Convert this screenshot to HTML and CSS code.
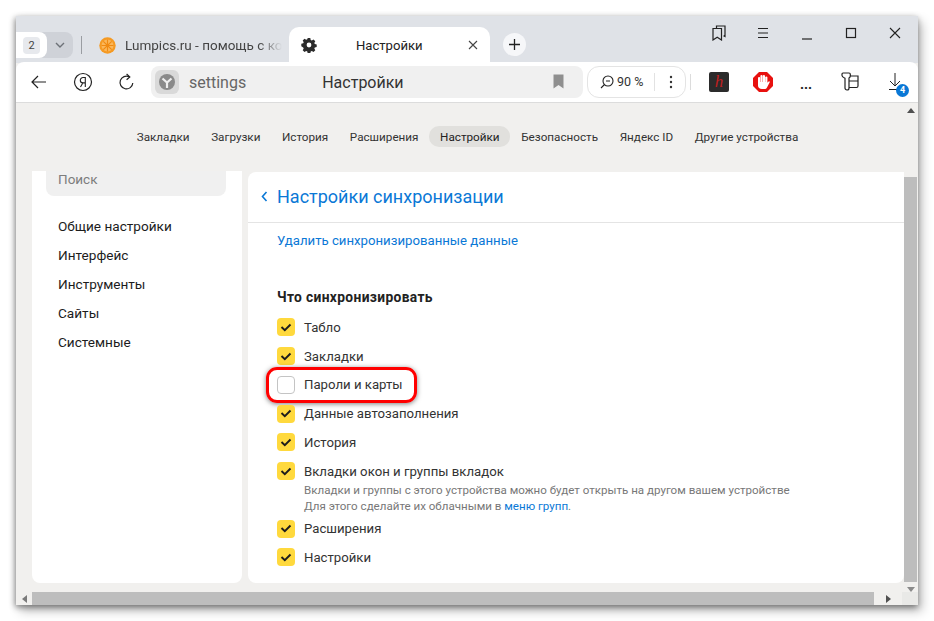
FILE: index.html
```html
<!DOCTYPE html>
<html lang="ru">
<head>
<meta charset="utf-8">
<title>Настройки</title>
<link rel="stylesheet" href="styles.css">
</head>
<body>
<div class="window">
  <div class="tabbar">
    <div class="group-switch">
      <div class="group-count"><span class="group-num">2</span></div>
      <div class="group-arrow"><svg width="12" height="8" viewBox="0 0 12 8"><path d="M2 2l4 4 4-4" fill="none" stroke="#6d7177" stroke-width="1.4"/></svg></div>
    </div>
    <div class="tab-sep"></div>
    <div class="tab-inactive">
      <svg class="favicon" width="17" height="17" viewBox="0 0 17 17"><circle cx="8.5" cy="8.5" r="8.2" fill="#f59a23"/><circle cx="8.5" cy="8.5" r="6" fill="#fbb75a"/><path d="M8.5 2.5v12M2.5 8.5h12M4.3 4.3l8.4 8.4M12.7 4.3l-8.4 8.4" stroke="#f08a12" stroke-width="1.2"/></svg>
      <span class="tab-title">Lumpics.ru - помощь с компьютером</span>
    </div>
    <div class="tab-active">
      <svg width="16" height="16" viewBox="0 0 16 16"><path fill="#2b2b2b" fill-rule="evenodd" d="M6.7 1h2.6l.4 1.9 1.1.5 1.7-1 1.8 1.8-1 1.7.5 1.1 1.9.4v2.6l-1.9.4-.5 1.1 1 1.7-1.8 1.8-1.7-1-1.1.5-.4 1.9H6.7l-.4-1.9-1.1-.5-1.7 1-1.8-1.8 1-1.7-.5-1.1L.3 9.3V6.7l1.9-.4.5-1.1-1-1.7 1.8-1.8 1.7 1 1.1-.5zM8 5.6a2.4 2.4 0 1 0 0 4.800a2.400 2.400 0 0 0 0-4.800z"/></svg>
      <span class="tab-active-title">Настройки</span>
      <svg class="tab-close" width="10" height="10" viewBox="0 0 10 10"><path d="M1 1l8 8M9 1l-8 8" stroke="#444" stroke-width="1.100"/></svg>
    </div>
    <div class="new-tab"><svg width="13" height="13" viewBox="0 0 13 13"><path d="M6.500 1v11M1 6.500h11" stroke="#222" stroke-width="1.300"/></svg></div>
    <div class="win-controls">
      <svg width="14" height="16" viewBox="0 0 14 16"><path d="M4.500 3V1h8.500v10.500l-1.500-.8M1 3.500h8.500V15L5.200 12.300 1 15z" fill="none" stroke="#222" stroke-width="1.200"/></svg>
      <svg width="14" height="12" viewBox="0 0 14 12"><path d="M2 1.500h10M2 6h10M2 10.500h10" stroke="#222" stroke-width="1.200"/></svg>
      <svg width="14" height="14" viewBox="0 0 14 14"><path d="M2 13h10" stroke="#222" stroke-width="1.200"/></svg>
      <svg width="14" height="14" viewBox="0 0 14 14"><rect x="2.500" y="2.500" width="9" height="9" fill="none" stroke="#222" stroke-width="1.200"/></svg>
      <svg width="14" height="14" viewBox="0 0 14 14"><path d="M2 2l10 10M12 2L2 12" stroke="#222" stroke-width="1.100"/></svg>
    </div>
  </div>

  <div class="toolbar">
    <div class="nav-btn"><svg width="18" height="16" viewBox="0 0 18 16"><path d="M16 8H2M8 2L2 8l6 6" fill="none" stroke="#222" stroke-width="1.200"/></svg></div>
    <div class="nav-btn"><svg width="20" height="20" viewBox="0 0 20 20"><circle cx="10" cy="10" r="8.500" fill="none" stroke="#222" stroke-width="1.200"/><path d="M12.300 15V5.500h-2.300a2.700 2.700 0 0 0 0 5.400h2.300M9.800 10.900L7.500 15" fill="none" stroke="#222" stroke-width="1.100"/></svg></div>
    <div class="nav-btn"><svg width="18" height="18" viewBox="0 0 18 18"><path d="M14.800 10a6.400 6.400 0 1 1-3.500-6.200" fill="none" stroke="#222" stroke-width="1.200"/><path d="M8.600 1l3.200 2.900-3.200 2.900" fill="none" stroke="#222" stroke-width="1.200"/></svg></div>
    <div class="address">
      <div class="addr-icon"><svg width="16" height="16" viewBox="0 0 16 16"><circle cx="8" cy="8" r="8" fill="#8a8a8a"/><path d="M3.500 4.500L8 8.500l4.500-4M8 8.500V14" fill="none" stroke="#eee" stroke-width="2.200"/></svg></div>
      <span class="addr-url">settings</span>
      <span class="addr-title">Настройки</span>
      <svg class="addr-mark" width="11" height="15" viewBox="0 0 11 15"><path d="M0.500 0.500h10v14l-5-3.500-5 3.500z" fill="#8f8f8f"/></svg>
    </div>
    <div class="zoom">
      <svg width="14" height="14" viewBox="0 0 14 14"><circle cx="8" cy="6" r="5" fill="none" stroke="#222" stroke-width="1.100"/><path d="M6 6h4M4.500 9.500L1 13" fill="none" stroke="#222" stroke-width="1.100"/></svg>
      <span class="zoom-val">90 %</span>
      <span class="zoom-sep"></span>
      <svg width="4" height="14" viewBox="0 0 4 14"><circle cx="2" cy="2" r="1.200" fill="#333"/><circle cx="2" cy="7" r="1.200" fill="#333"/><circle cx="2" cy="12" r="1.200" fill="#333"/></svg>
    </div>
    <div class="tool-sep"></div>
    <div class="ext ext-h"><span class="ext-h-letter">h</span></div>
    <div class="ext ext-stop"><svg width="20" height="20" viewBox="0 0 20 20"><path d="M6 0h8l6 6v8l-6 6H6l-6-6V6z" fill="#e8110f"/><g fill="#fff"><rect x="5" y="5" width="2.200" height="8" rx="1.100"/><rect x="7.400" y="3" width="2.200" height="9" rx="1.100"/><rect x="9.800" y="3" width="2.200" height="9" rx="1.100"/><rect x="12.200" y="4.500" width="2.200" height="8" rx="1.100"/><path d="M5 10h9.400v1l1.200-1.500c.7-.6 1.500 0 1.100.8L14 15.500c-.6 1-1.400 1.500-2.500 1.500H9c-2.500 0-4-1.500-4-3.500z"/></g></svg></div>
    <div class="ext ext-dots">...</div>
    <div class="ext"><svg width="20" height="20" viewBox="0 0 20 20"><path d="M3 1h6c.8 0 1.300.5 1.300 1.300V4c0 1-.500 1.500-1.300 2v10c0 1.200-.7 2-1.800 2H7c-1.200 0-2-.8-2-2V6.200C3.500 5.500 2 5 2 3.500V2C2 1.400 2.400 1 3 1zM10.500 4H18v10c0 1-.5 1.500-1.500 1.500H9M9.500 9h8.500" fill="none" stroke="#222" stroke-width="1.200"/></svg></div>
    <div class="ext ext-dl"><svg width="16" height="18" viewBox="0 0 16 18"><path d="M7 0v12M2 8l5 5 5-5M1 16.500h10" fill="none" stroke="#222" stroke-width="1"/></svg><span class="dl-badge">4</span></div>
  </div>

  <div class="page">
    <div class="page-row">
      <div class="main">
        <nav class="topnav">
          <a class="nav-item">Закладки</a>
          <a class="nav-item">Загрузки</a>
          <a class="nav-item">История</a>
          <a class="nav-item">Расширения</a>
          <a class="nav-item nav-current">Настройки</a>
          <a class="nav-item">Безопасность</a>
          <a class="nav-item">Яндекс ID</a>
          <a class="nav-item">Другие устройства</a>
        </nav>
        <div class="columns">
          <aside class="sidebar">
            <div class="search">Поиск</div>
            <ul class="side-list">
              <li>Общие настройки</li>
              <li>Интерфейс</li>
              <li>Инструменты</li>
              <li>Сайты</li>
              <li>Системные</li>
            </ul>
          </aside>
          <section class="panel">
            <header class="panel-head">
              <svg width="7" height="11" viewBox="0 0 7 11"><path d="M5.500 1L1.500 5.500l4 4.500" fill="none" stroke="#0a78d6" stroke-width="1.600"/></svg>
              <h1 class="panel-title">Настройки синхронизации</h1>
            </header>
            <div class="panel-body">
              <a class="del-link">Удалить синхронизированные данные</a>
              <h2 class="sync-title">Что синхронизировать</h2>
              <div class="check-row"><span class="box on"><svg width="12" height="9" viewBox="0 0 12 9"><path d="M1.500 4l3.300 3.200L10.500 1.500" fill="none" stroke="#1c1c1c" stroke-width="1.900"/></svg></span><span>Табло</span></div>
              <div class="check-row"><span class="box on"><svg width="12" height="9" viewBox="0 0 12 9"><path d="M1.500 4l3.300 3.200L10.500 1.500" fill="none" stroke="#1c1c1c" stroke-width="1.900"/></svg></span><span>Закладки</span></div>
              <div class="check-row"><span class="box"></span><span>Пароли и карты</span><span class="highlight"></span></div>
              <div class="check-row"><span class="box on"><svg width="12" height="9" viewBox="0 0 12 9"><path d="M1.500 4l3.300 3.200L10.500 1.500" fill="none" stroke="#1c1c1c" stroke-width="1.900"/></svg></span><span>Данные автозаполнения</span></div>
              <div class="check-row"><span class="box on"><svg width="12" height="9" viewBox="0 0 12 9"><path d="M1.500 4l3.300 3.200L10.500 1.500" fill="none" stroke="#1c1c1c" stroke-width="1.900"/></svg></span><span>История</span></div>
              <div class="check-row"><span class="box on"><svg width="12" height="9" viewBox="0 0 12 9"><path d="M1.500 4l3.300 3.200L10.500 1.500" fill="none" stroke="#1c1c1c" stroke-width="1.900"/></svg></span><span>Вкладки окон и группы вкладок</span></div>
              <p class="check-note">Вкладки и группы с этого устройства можно будет открыть на другом вашем устройстве<br>Для этого сделайте их облачными в <a class="note-link">меню групп</a>.</p>
              <div class="check-row"><span class="box on"><svg width="12" height="9" viewBox="0 0 12 9"><path d="M1.500 4l3.300 3.200L10.500 1.500" fill="none" stroke="#1c1c1c" stroke-width="1.900"/></svg></span><span>Расширения</span></div>
              <div class="check-row"><span class="box on"><svg width="12" height="9" viewBox="0 0 12 9"><path d="M1.500 4l3.300 3.200L10.500 1.500" fill="none" stroke="#1c1c1c" stroke-width="1.900"/></svg></span><span>Настройки</span></div>
            </div>
          </section>
        </div>
      </div>
      <div class="vscroll">
        <svg width="8" height="5" viewBox="0 0 8 5"><path d="M4 0l4 5H0z" fill="#505050"/></svg>
        <div class="vthumb"></div>
        <svg width="8" height="5" viewBox="0 0 8 5"><path d="M4 5l4-5H0z" fill="#8a8a8a"/></svg>
      </div>
    </div>
    <div class="hscroll">
      <div class="harrow"><svg width="5" height="8" viewBox="0 0 5 8"><path d="M0 4l5-4v8z" fill="#7a7a7a"/></svg></div>
      <div class="hthumb"></div>
      <div class="harrow harrow-right"><svg width="5" height="8" viewBox="0 0 5 8"><path d="M5 4L0 0v8z" fill="#505050"/></svg></div>
      <div class="corner"></div>
    </div>
  </div>
</div>
</body>
</html>
```
FILE: styles.css
```css
* { box-sizing: border-box; }
html, body { margin: 0; height: 100%; background: #fff; overflow: hidden; }
body { padding: 16px; font-family: Roboto, "Noto Sans", sans-serif; color: #222; }
.window { width: 902px; height: 589px; display: flex; flex-direction: column; background: #f1f0ee; box-shadow: -1px 2px 6px rgba(0,0,0,.45), 4px 6px 10px rgba(0,0,0,.25); }

.tabbar { height: 47px; background: #dfe2e7; display: flex; align-items: flex-start; padding-top: 11px; position: relative; flex: none; }
.group-switch { width: 57px; height: 26px; margin-top: 5px; display: flex; background: #cfd2d8; border-radius: 0 8px 8px 0; }
.group-count { width: 31px; height: 26px; background: #fff; border-radius: 0 8px 8px 0; display: flex; align-items: center; justify-content: center; }
.group-num { width: 17px; height: 17px; background: #e7e9ed; border-radius: 4px; font-size: 11px; line-height: 17px; text-align: center; color: #444; }
.group-arrow { flex: 1; display: flex; align-items: center; justify-content: center; }
.tab-sep { width: 1px; height: 18px; background: #9a9da2; margin: 9px 0 0 8px; }
.tab-inactive { width: 207px; display: flex; align-items: center; height: 26px; margin-top: 5px; padding-left: 17px; gap: 9px; overflow: hidden; white-space: nowrap; }
.tab-title { font-size: 13.500px; color: #444; width: 157px; overflow: hidden; -webkit-mask-image: linear-gradient(90deg, #000 85%, transparent); mask-image: linear-gradient(90deg, #000 85%, transparent); }
.tab-active { width: 201px; height: 36px; background: #fff; border-radius: 10px 10px 0 0; display: flex; align-items: center; padding: 0 0 0 12px; flex: none; position: relative; }
.tab-active-title { font-size: 13.100px; color: #222; margin-left: 39px; }
.tab-close { margin-left: auto; margin-right: 12px; }
.new-tab { width: 23px; height: 23px; background: #f6f7f9; border-radius: 50%; margin: 6px 0 0 13px; display: flex; align-items: center; justify-content: center; }
.win-controls { position: absolute; right: 16px; top: 10px; display: flex; gap: 30px; align-items: center; height: 14px; }

.toolbar { height: 41px; background: #fff; display: flex; align-items: center; padding: 0 0 1px 1px; flex: none; border-bottom: 1px solid #dcdcdc; border-radius: 8px 8px 0 0; margin-top: -1px; position: relative; }
.nav-btn { width: 44px; display: flex; justify-content: center; }
.address { width: 432px; height: 32px; background: #f0f0f0; border-radius: 8px; margin-left: 2px; display: flex; align-items: center; padding-left: 4px; position: relative; }
.addr-icon { width: 24px; height: 24px; background: #d9d9d9; border-radius: 6px; display: flex; align-items: center; justify-content: center; }
.addr-url { font-size: 16px; color: #666; margin: 2px 0 0 10px; }
.addr-title { font-size: 16px; color: #333; margin: 2px 0 0 76px; }
.addr-mark { margin-left: auto; margin-right: 19px; }
.zoom { width: 99px; height: 32px; border: 1px solid #e4e4e4; border-radius: 12px; margin-left: 4px; display: flex; align-items: center; padding-left: 12px; }
.zoom-val { font-size: 12.500px; color: #333; margin-left: 3px; }
.zoom-sep { width: 1px; height: 18px; background: #e2e2e2; margin: 0 14px 0 11px; }
.tool-sep { width: 1px; height: 16px; background: #dcdcdc; margin: 0 0 0 4px; }
.ext { width: 20px; height: 20px; display: flex; align-items: center; justify-content: center; margin-left: 24px; flex: none; position: relative; }
.ext-h { margin-left: 18px; background: #2b2b2b; border-radius: 2px; }
.ext-h-letter { font: italic 400 17px "Liberation Serif", serif; color: #c01f1f; }
.ext-dots { font-size: 14px; font-weight: 700; color: #222; margin-top: 4px; margin-left: 23px; }
.ext-dl { margin-left: 26px; }
.dl-badge { position: absolute; right: -3px; bottom: -5px; width: 13px; height: 13px; border-radius: 50%; background: #0a78d6; color: #fff; font-size: 9px; font-weight: 700; line-height: 13px; text-align: center; }

.page { flex: 1; display: flex; flex-direction: column; min-height: 0; }
.page-row { flex: 1; display: flex; min-height: 0; }
.main { flex: 1; min-width: 0; display: flex; flex-direction: column; }
.topnav { height: 68px; display: flex; justify-content: center; align-items: flex-start; padding: 23px 0 0 15px; flex: none; }
.nav-item { font-size: 11.700px; line-height: 20px; padding: 1px 10.800px 0; color: #333; border-radius: 10px; white-space: nowrap; }
.nav-current { background: #e1e0dd; color: #222; }
.columns { flex: 1; min-height: 0; display: flex; gap: 6px; padding: 0 0 9px 16px; }
.sidebar { width: 210px; background: #fff; border-radius: 0 0 8px 8px; padding: 0 16px 0 14px; }
.search { height: 25px; background: #f0f0f0; border-radius: 0 0 8px 8px; font-size: 13.500px; line-height: 17px; color: #7d7d7d; padding: 0 0 0 12px; }
.side-list { list-style: none; margin: 16px 0 0; padding: 0 0 0 12px; }
.side-list li { font-size: 13.600px; line-height: 29px; color: #1c1c1c; }
.panel { flex: 1; background: #fff; border-radius: 8px 0 8px 8px; margin-top: 1px; }
.panel-head { height: 51px; padding: 0 0 1px 13px; border-bottom: 1px solid #e4e4e4; display: flex; align-items: center; gap: 9px; }
.panel-title { font-size: 18px; font-weight: 400; color: #0a78d6; margin: 0; }
.panel-body { padding: 9px 0 0 29px; }
.del-link { display: block; font-size: 13.200px; line-height: 18px; color: #0a78d6; }
.sync-title { font-size: 13.800px; letter-spacing: .35px; line-height: 18px; font-weight: 700; color: #222; margin: 38px 0 7px; }
.check-row { display: flex; align-items: center; height: 28.750px; font-size: 13.200px; gap: 9px; color: #333; position: relative; }
.box { width: 18px; height: 18px; border-radius: 4px; border: 1px solid #c4c4c4; display: flex; align-items: center; justify-content: center; flex: none; }
.box.on { background: #ffd93d; border: none; }
.check-note { font-size: 11.570px; line-height: 16px; color: #777; margin: -4px 0 .800px 27px; }
.note-link { color: #0a78d6; }
.highlight { position: absolute; left: -11px; top: -4px; width: 151px; height: 36px; border: 3.500px solid #f00; border-radius: 11px; box-shadow: 0 1px 5px rgba(0,0,0,.5); pointer-events: none; }
.vscroll { width: 13px; margin-right: 1px; display: flex; flex-direction: column; align-items: center; padding-top: 5px; }
.vthumb { width: 13px; flex: 1; background: #bdbdbd; margin: 64px 0 5px; }
.hscroll { height: 13px; display: flex; flex: none; }
.harrow { width: 16px; display: flex; align-items: center; justify-content: center; }
.harrow-right { width: 28px; }
.hthumb { flex: 1; background: #bdbdbd; }
.corner { width: 16px; background: #e9e9e7; }
```
